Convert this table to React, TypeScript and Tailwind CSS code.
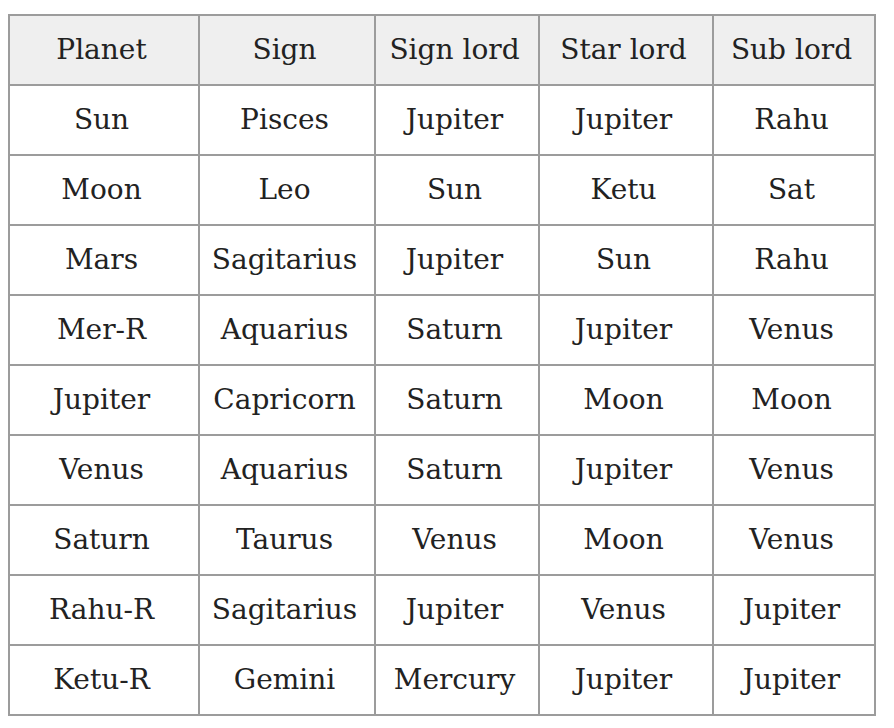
const headers = ["Planet", "Sign", "Sign lord", "Star lord", "Sub lord"];

const rows = [
  ["Sun", "Pisces", "Jupiter", "Jupiter", "Rahu"],
  ["Moon", "Leo", "Sun", "Ketu", "Sat"],
  ["Mars", "Sagitarius", "Jupiter", "Sun", "Rahu"],
  ["Mer-R", "Aquarius", "Saturn", "Jupiter", "Venus"],
  ["Jupiter", "Capricorn", "Saturn", "Moon", "Moon"],
  ["Venus", "Aquarius", "Saturn", "Jupiter", "Venus"],
  ["Saturn", "Taurus", "Venus", "Moon", "Venus"],
  ["Rahu-R", "Sagitarius", "Jupiter", "Venus", "Jupiter"],
  ["Ketu-R", "Gemini", "Mercury", "Jupiter", "Jupiter"],
];

export default function App() {
  return (
    <div className="min-h-screen bg-white pl-2 pt-[14px] font-['DejaVu_Serif',serif] text-[28px] text-[#222]">
      <div className="grid w-fit grid-cols-[190px_176px_164px_174px_162px] border-l-2 border-t-2 border-[#9c9c9c]">
        {headers.map((h) => (
          <div
            key={h}
            className="flex h-[70px] items-center justify-center border-b-2 border-r-2 border-[#9c9c9c] bg-[#efefef] pr-[5px]"
          >
            {h}
          </div>
        ))}
        {rows.map((row, i) =>
          row.map((cell, j) => (
            <div
              key={`${i}-${j}`}
              className="flex h-[70px] items-center justify-center border-b-2 border-r-2 border-[#9c9c9c] pr-[5px]"
            >
              {cell}
            </div>
          ))
        )}
      </div>
    </div>
  );
}
